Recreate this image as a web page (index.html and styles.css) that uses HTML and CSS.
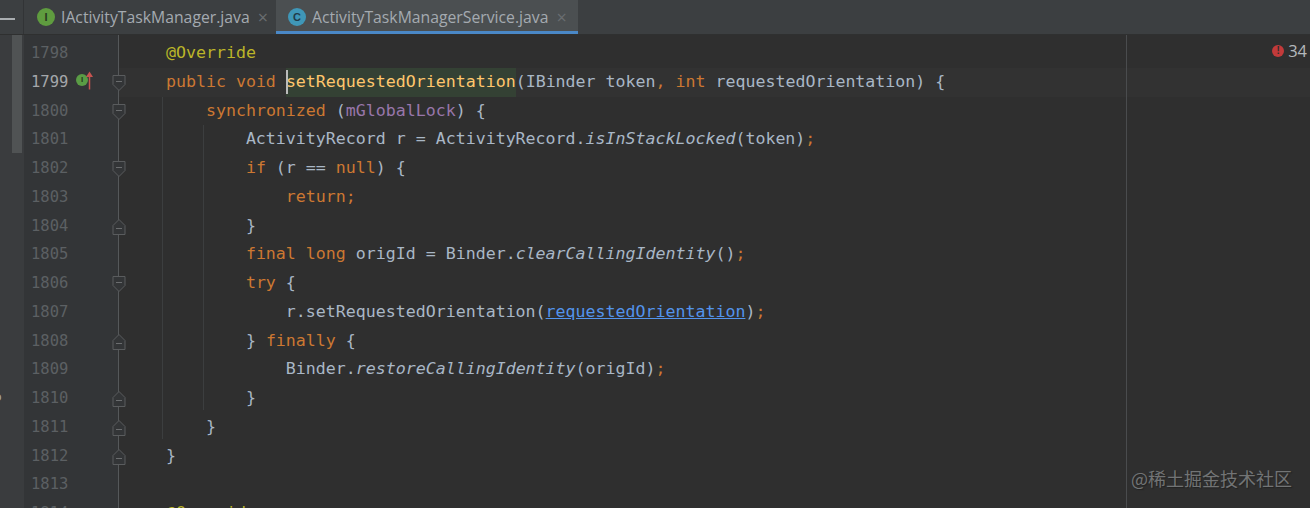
FILE: index.html
```html
<!DOCTYPE html>
<html lang="en">
<head>
    <meta charset="UTF-8">
    <title>ActivityTaskManagerService.java</title>
    <link rel="stylesheet" href="styles.css">
</head>
<body>
    <svg class="defs" width="0" height="0">
        <symbol id="fold-open" viewBox="0 0 14 18"><path d="M1 1.500H13V10.500L7 16.500L1 10.500Z" fill="#333537" stroke="#5a5c5e"/><path d="M4 7.500H10" stroke="#6b6d6f"/></symbol>
        <symbol id="fold-close" viewBox="0 0 14 18"><path d="M1 16.500H13V7.500L7 1.500L1 7.500Z" fill="#333537" stroke="#5a5c5e"/><path d="M4 10.500H10" stroke="#6b6d6f"/></symbol>
    </svg>
    <div class="tabs">
        <div class="menu"><span class="dash"></span></div>
        <div class="tab">
            <span class="file-icon green">I</span>
            <span class="tab-name">IActivityTaskManager.java</span>
            <span class="tab-close">&times;</span>
        </div>
        <div class="tab active">
            <span class="file-icon blue">C</span>
            <span class="tab-name">ActivityTaskManagerService.java</span>
            <span class="tab-close">&times;</span>
        </div>
    </div>
    <div class="editor">
        <div class="strip"><div class="thumb"></div><span class="cut-off">o</span></div>
        <div class="gutter">
            <div class="num">1798</div>
            <div class="num now">1799
                <span class="impl">I</span>
                <svg class="up-arrow" width="9" height="19" viewBox="0 0 9 19"><path d="M4.500 18.500V4" fill="none" stroke="#c75450" stroke-width="1.500"/><path d="M1 6L4.500 0.500L8 6Z" fill="#c75450"/></svg>
                <svg class="fold"><use href="#fold-open"/></svg>
            </div>
            <div class="num">1800<svg class="fold"><use href="#fold-open"/></svg></div>
            <div class="num">1801</div>
            <div class="num">1802<svg class="fold"><use href="#fold-open"/></svg></div>
            <div class="num">1803</div>
            <div class="num">1804<svg class="fold"><use href="#fold-close"/></svg></div>
            <div class="num">1805</div>
            <div class="num">1806<svg class="fold"><use href="#fold-open"/></svg></div>
            <div class="num">1807</div>
            <div class="num">1808<svg class="fold"><use href="#fold-close"/></svg></div>
            <div class="num">1809</div>
            <div class="num">1810<svg class="fold"><use href="#fold-close"/></svg></div>
            <div class="num">1811<svg class="fold"><use href="#fold-close"/></svg></div>
            <div class="num">1812<svg class="fold"><use href="#fold-close"/></svg></div>
            <div class="num">1813</div>
            <div class="num">1814</div>
        </div>
        <div class="code">
            <div class="guide g1"></div>
            <div class="guide g2"></div>
            <div class="margin-line"></div>
<pre class="line">    <span class="ann">@Override</span></pre>
<pre class="line caret-line">    <span class="kw">public void</span> <span class="caret"></span><span class="decl">setRequestedOrientation</span>(IBinder token<span class="kw">,</span> <span class="kw">int</span> requestedOrientation) {</pre>
<pre class="line">        <span class="kw">synchronized</span> (<span class="field">mGlobalLock</span>) {</pre>
<pre class="line">            ActivityRecord r = ActivityRecord.<i>isInStackLocked</i>(token)<span class="kw">;</span></pre>
<pre class="line">            <span class="kw">if</span> (r == <span class="kw">null</span>) {</pre>
<pre class="line">                <span class="kw">return;</span></pre>
<pre class="line">            }</pre>
<pre class="line">            <span class="kw">final long</span> origId = Binder.<i>clearCallingIdentity</i>()<span class="kw">;</span></pre>
<pre class="line">            <span class="kw">try</span> {</pre>
<pre class="line">                r.setRequestedOrientation(<span class="param">requestedOrientation</span>)<span class="kw">;</span></pre>
<pre class="line">            } <span class="kw">finally</span> {</pre>
<pre class="line">                Binder.<i>restoreCallingIdentity</i>(origId)<span class="kw">;</span></pre>
<pre class="line">            }</pre>
<pre class="line">        }</pre>
<pre class="line">    }</pre>
<pre class="line"> </pre>
<pre class="line">    <span class="ann">@Override</span></pre>
        </div>
        <div class="errors"><span class="err-dot">!</span>34</div>
        <div class="watermark">@稀土掘金技术社区</div>
    </div>
</body>
</html>
```

FILE: styles.css
```css
html, body {
    margin: 0;
    height: 100%;
    overflow: hidden;
    background-color: #2f2f2f;
}
.defs {
    position: absolute;
}

/* tab bar */
.tabs {
    display: flex;
    height: 34px;
    background-color: #3c3f41;
    border-bottom: 1px solid #2f3030;
    font-family: "Open Sans", "Noto Sans", sans-serif;
    font-size: 15.750px;
    color: #a4aab0;
}
.menu {
    width: 24px;
    display: flex;
    align-items: center;
    padding-top: 4px;
    border-right: 1px solid #323436;
    box-sizing: border-box;
}
.dash {
    width: 15px;
    height: 2px;
    background-color: #a9adb0;
}
.tab {
    display: flex;
    align-items: center;
    width: 252px;
    box-sizing: border-box;
    padding-left: 13px;
}
.tab.active {
    width: 302px;
    padding-left: 12px;
    padding-top: 2px;
    background-color: #4b4f51;
    border-bottom: 3px solid #4a88c7;
}
.file-icon {
    width: 18px;
    height: 18px;
    border-radius: 50%;
    margin-right: 6px;
    font-family: "Liberation Sans", sans-serif;
    font-size: 11px;
    font-weight: bold;
    line-height: 18px;
    text-align: center;
    color: #28381f;
    flex-shrink: 0;
}
.file-icon.green {
    background-color: #5f9c3f;
}
.file-icon.blue {
    background-color: #3f97b8;
    color: #1f3c4a;
}
.tab-name {
    white-space: nowrap;
}
.tab-close {
    margin-left: 8px;
    font-size: 18px;
    line-height: 18px;
    color: #696d70;
}

/* editor */
.editor {
    position: relative;
    display: flex;
    padding-top: 4px;
    font-family: "DejaVu Sans Mono", monospace;
    font-size: 16.600px;
    line-height: 28.750px;
    color: #a9b7c6;
}
.strip {
    position: relative;
    width: 24px;
    flex-shrink: 0;
    margin-top: -4px;
    background-color: #3a3c3e;
}
.thumb {
    width: 10px;
    height: 118px;
    margin-left: 12px;
    background-color: #505354;
}
.cut-off {
    position: absolute;
    left: -6px;
    top: 348px;
    font-size: 13px;
    color: #a4a7aa;
}
.gutter {
    position: relative;
    z-index: 1;
    width: 94px;
    flex-shrink: 0;
    margin-top: -4px;
    padding-top: 4px;
    background-color: #333537;
    border-right: 1px solid #55585a;
    font-size: 15.500px;
    color: #5c6063;
}
.num {
    position: relative;
    height: 28.750px;
    padding-left: 7px;
}
.num.now {
    color: #a4a7aa;
}
.fold {
    position: absolute;
    left: 88px;
    top: 6px;
    width: 14px;
    height: 18px;
}
.impl {
    position: absolute;
    left: 52px;
    top: 6px;
    width: 12px;
    height: 12px;
    border-radius: 50%;
    background-color: #5a9c45;
    color: #233a1c;
    font-family: "Liberation Sans", sans-serif;
    font-size: 8px;
    font-weight: bold;
    line-height: 12px;
    text-align: center;
}
.up-arrow {
    position: absolute;
    left: 61px;
    top: 3px;
}
.code {
    position: relative;
    flex-grow: 1;
    padding-left: 7px;
}
.line {
    margin: 0;
    height: 28.750px;
    font: inherit;
    white-space: pre;
}
.caret-line {
    margin-left: -7px;
    padding-left: 7px;
    background-color: #323232;
}
.kw {
    color: #cc7832;
}
.ann {
    color: #bbb529;
}
.field {
    color: #9876aa;
}
.decl {
    display: inline-block;
    color: #ffc66d;
    background-color: #344134;
}
.param {
    color: #5394ec;
    text-decoration: underline;
}
.caret {
    position: relative;
    z-index: 1;
    display: inline-block;
    width: 2px;
    height: 24px;
    margin-right: -2px;
    vertical-align: -7px;
    background-color: #bbbbbb;
}

/* lines drawn over the code */
.guide {
    position: absolute;
    width: 1px;
    background-color: #3c3e3f;
}
.g1 {
    left: 43px;
    top: 58px;
    height: 342px;
}
.g2 {
    left: 84px;
    top: 86px;
    height: 285px;
}
.margin-line {
    position: absolute;
    left: 1007px;
    top: -4px;
    height: 480px;
    width: 1px;
    background-color: #4a4c4e;
}
.errors {
    position: absolute;
    right: 3px;
    top: 2px;
    display: flex;
    align-items: center;
    gap: 4px;
    font-family: "Open Sans", sans-serif;
    font-size: 16.500px;
    color: #b4b8bc;
}
.err-dot {
    width: 12px;
    height: 12px;
    border-radius: 50%;
    background-color: #c23a3a;
    color: #2f2f2f;
    font-family: "Liberation Sans", sans-serif;
    font-size: 10px;
    font-weight: bold;
    line-height: 12px;
    text-align: center;
}
.watermark {
    position: absolute;
    right: 18px;
    top: 428px;
    font-family: "Noto Sans CJK SC", "Liberation Sans", sans-serif;
    font-size: 18px;
    line-height: 30px;
    color: #727475;
    text-shadow: 1px 1px 1px #222;
}
```
